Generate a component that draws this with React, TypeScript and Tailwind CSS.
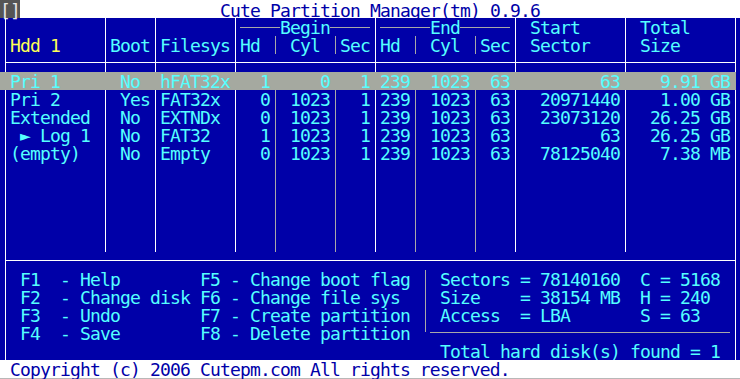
const BLUE = "bg-[#0000a8]";

const parts = [
  { name: "Pri 1", boot: "No", fs: "hFAT32x", bh: "1", bc: "0", bs: "1", eh: "239", ec: "1023", es: "63", start: "63", size: "9.91 GB", sel: true },
  { name: "Pri 2", boot: "Yes", fs: "FAT32x", bh: "0", bc: "1023", bs: "1", eh: "239", ec: "1023", es: "63", start: "20971440", size: "1.00 GB" },
  { name: "Extended", boot: "No", fs: "EXTNDx", bh: "0", bc: "1023", bs: "1", eh: "239", ec: "1023", es: "63", start: "23073120", size: "26.25 GB" },
  { name: " \u25BA Log 1", boot: "No", fs: "FAT32", bh: "1", bc: "1023", bs: "1", eh: "239", ec: "1023", es: "63", start: "63", size: "26.25 GB" },
  { name: "(empty)", boot: "No", fs: "Empty", bh: "0", bc: "1023", bs: "1", eh: "239", ec: "1023", es: "63", start: "78125040", size: "7.38 MB" },
];

const keys = [
  "F1  - Help        F5 - Change boot flag",
  "F2  - Change disk F6 - Change file sys",
  "F3  - Undo        F7 - Create partition",
  "F4  - Save        F8 - Delete partition",
];

function PartRow({ p }: { p: (typeof parts)[number] }) {
  const w = p.sel ? "border-[#a5a9a0]" : "border-white";
  const g = p.sel ? "border-[#a5a9a0]" : "border-[#a8a8a8]";
  return (
    <div className={`flex h-[18px] ${p.sel ? "bg-[#a5a9a0]" : ""}`}>
      <div className="w-[5px]" />
      <div className={`w-[100px] border-l ${w} pl-[4px] whitespace-pre`}>{p.name}</div>
      <div className={`w-[50px] border-l ${w} pl-[14px]`}>{p.boot}</div>
      <div className={`w-[80px] border-l ${w} pl-[4px]`}>{p.fs}</div>
      <div className={`w-[40px] border-l ${w} pr-[5px] text-right`}>{p.bh}</div>
      <div className={`w-[60px] border-l ${g} pr-[5px] text-right`}>{p.bc}</div>
      <div className={`w-[40px] border-l ${g} pr-[5px] text-right`}>{p.bs}</div>
      <div className={`w-[40px] border-l ${w} pr-[5px] text-right`}>{p.eh}</div>
      <div className={`w-[60px] border-l ${g} pr-[5px] text-right`}>{p.ec}</div>
      <div className={`w-[40px] border-l ${g} pr-[5px] text-right`}>{p.es}</div>
      <div className={`w-[110px] border-l ${w} pr-[5px] text-right`}>{p.start}</div>
      <div className={`w-[110px] border-l ${w} pr-[5px] text-right`}>{p.size}</div>
      <div className={`w-[5px] border-l ${w} ${p.sel ? BLUE : ""}`} />
    </div>
  );
}

export default function App() {
  return (
    <div className="w-[740px] h-[379px] overflow-hidden bg-white font-['DejaVu_Sans_Mono',monospace] text-[18px] leading-[20px] tracking-[-0.84px]">
      {/* title bar */}
      <div className="flex h-[18px] text-[#0000a8] leading-[21px]">
        <div className="w-[20px] bg-[#555555] text-[#e8e8e8] overflow-visible whitespace-pre">[]</div>
        <div className="pl-[200px] whitespace-pre">Cute Partition Manager(tm) 0.9.6</div>
      </div>

      <div className={`${BLUE} text-[#55ffff] h-[342px]`}>
        {/* header: group titles */}
        <div className="flex h-[18px]">
          <div className="w-[5px]" />
          <div className="w-[100px] border-l border-white" />
          <div className="w-[50px] border-l border-white" />
          <div className="w-[80px] border-l border-white" />
          <div className="w-[140px] border-l border-white flex items-center pl-[4px] pr-[5px]">
            <div className="flex-1 h-px bg-[#a8a8a8]" />
            <span className="self-start">Begin</span>
            <div className="flex-1 h-px bg-[#a8a8a8]" />
          </div>
          <div className="w-[140px] border-l border-white flex items-center pl-[4px] pr-[5px]">
            <div className="flex-1 h-px bg-[#a8a8a8]" />
            <span className="self-start">End</span>
            <div className="flex-1 h-px bg-[#a8a8a8]" />
          </div>
          <div className="w-[110px] border-l border-white pl-[14px]">Start</div>
          <div className="w-[110px] border-l border-white pl-[14px]">Total</div>
          <div className="w-[5px] border-l border-white" />
        </div>

        {/* header: column names */}
        <div className="flex h-[18px]">
          <div className="w-[5px]" />
          <div className="w-[100px] border-l border-white pl-[4px] text-[#ffff55]">Hdd 1</div>
          <div className="w-[50px] border-l border-white pl-[4px]">Boot</div>
          <div className="w-[80px] border-l border-white pl-[4px]">Filesys</div>
          <div className="w-[40px] border-l border-white pl-[4px]">Hd</div>
          <div className="w-[60px] border-l border-[#a8a8a8] pl-[14px]">Cyl</div>
          <div className="w-[40px] border-l border-[#a8a8a8] pl-[4px]">Sec</div>
          <div className="w-[40px] border-l border-white pl-[4px]">Hd</div>
          <div className="w-[60px] border-l border-[#a8a8a8] pl-[14px]">Cyl</div>
          <div className="w-[40px] border-l border-[#a8a8a8] pl-[4px]">Sec</div>
          <div className="w-[110px] border-l border-white pl-[14px]">Sector</div>
          <div className="w-[110px] border-l border-white pl-[14px]">Size</div>
          <div className="w-[5px] border-l border-white" />
        </div>

        {/* header rule */}
        <div className="flex h-[18px]">
          <div className="w-[5px]" />
          {[100, 50, 80, 140, 140, 110, 110].map((cw, i) => (
            <div key={i} className="border-l border-white pt-[8px]" style={{ width: cw }}>
              <div className="h-px bg-white" />
            </div>
          ))}
          <div className="w-[5px] border-l border-white" />
        </div>

        {parts.map((p, i) => (
          <PartRow key={i} p={p} />
        ))}

        {/* empty table space */}
        <div className="flex h-[90px]">
          <div className="w-[5px]" />
          <div className="w-[100px] border-l border-white" />
          <div className="w-[50px] border-l border-white" />
          <div className="w-[80px] border-l border-white" />
          <div className="w-[40px] border-l border-white" />
          <div className="w-[60px] border-l border-[#a8a8a8]" />
          <div className="w-[40px] border-l border-[#a8a8a8]" />
          <div className="w-[40px] border-l border-white" />
          <div className="w-[60px] border-l border-[#a8a8a8]" />
          <div className="w-[40px] border-l border-[#a8a8a8]" />
          <div className="w-[110px] border-l border-white" />
          <div className="w-[110px] border-l border-white" />
          <div className="w-[5px] border-l border-white" />
        </div>

        {/* bottom panel */}
        <div className="ml-[5px] w-[731px] h-[108px] border-x border-white">
          <div className="h-[18px] pt-[8px]">
            <div className="h-px bg-white" />
          </div>
          <div className="flex">
            <div className="w-[419px] pl-[14px]">
              {keys.map((k) => (
                <div key={k} className="h-[18px] whitespace-pre">{k}</div>
              ))}
            </div>
            <div className="w-[310px]">
              <div className="h-[62px] border-l border-[#a8a8a8] pl-[14px] whitespace-pre">
                <div className="h-[18px]">Sectors = 78140160  C = 5168</div>
                <div className="h-[18px]">Size    = 38154 MB  H = 240</div>
                <div className="h-[18px]">Access  = LBA       S = 63</div>
              </div>
              <div className="ml-[5px] w-[300px] h-px bg-[#a8a8a8]" />
              <div className="h-[9px]" />
              <div className="h-[18px] pl-[15px] whitespace-pre">Total hard disk(s) found = 1</div>
            </div>
          </div>
        </div>
      </div>

      {/* status line */}
      <div className="h-[19px] pl-[10px] text-[#0000a8] whitespace-pre border-b border-[#b8b8b8]">
        Copyright (c) 2006 Cutepm.com All rights reserved.
      </div>
    </div>
  );
}
